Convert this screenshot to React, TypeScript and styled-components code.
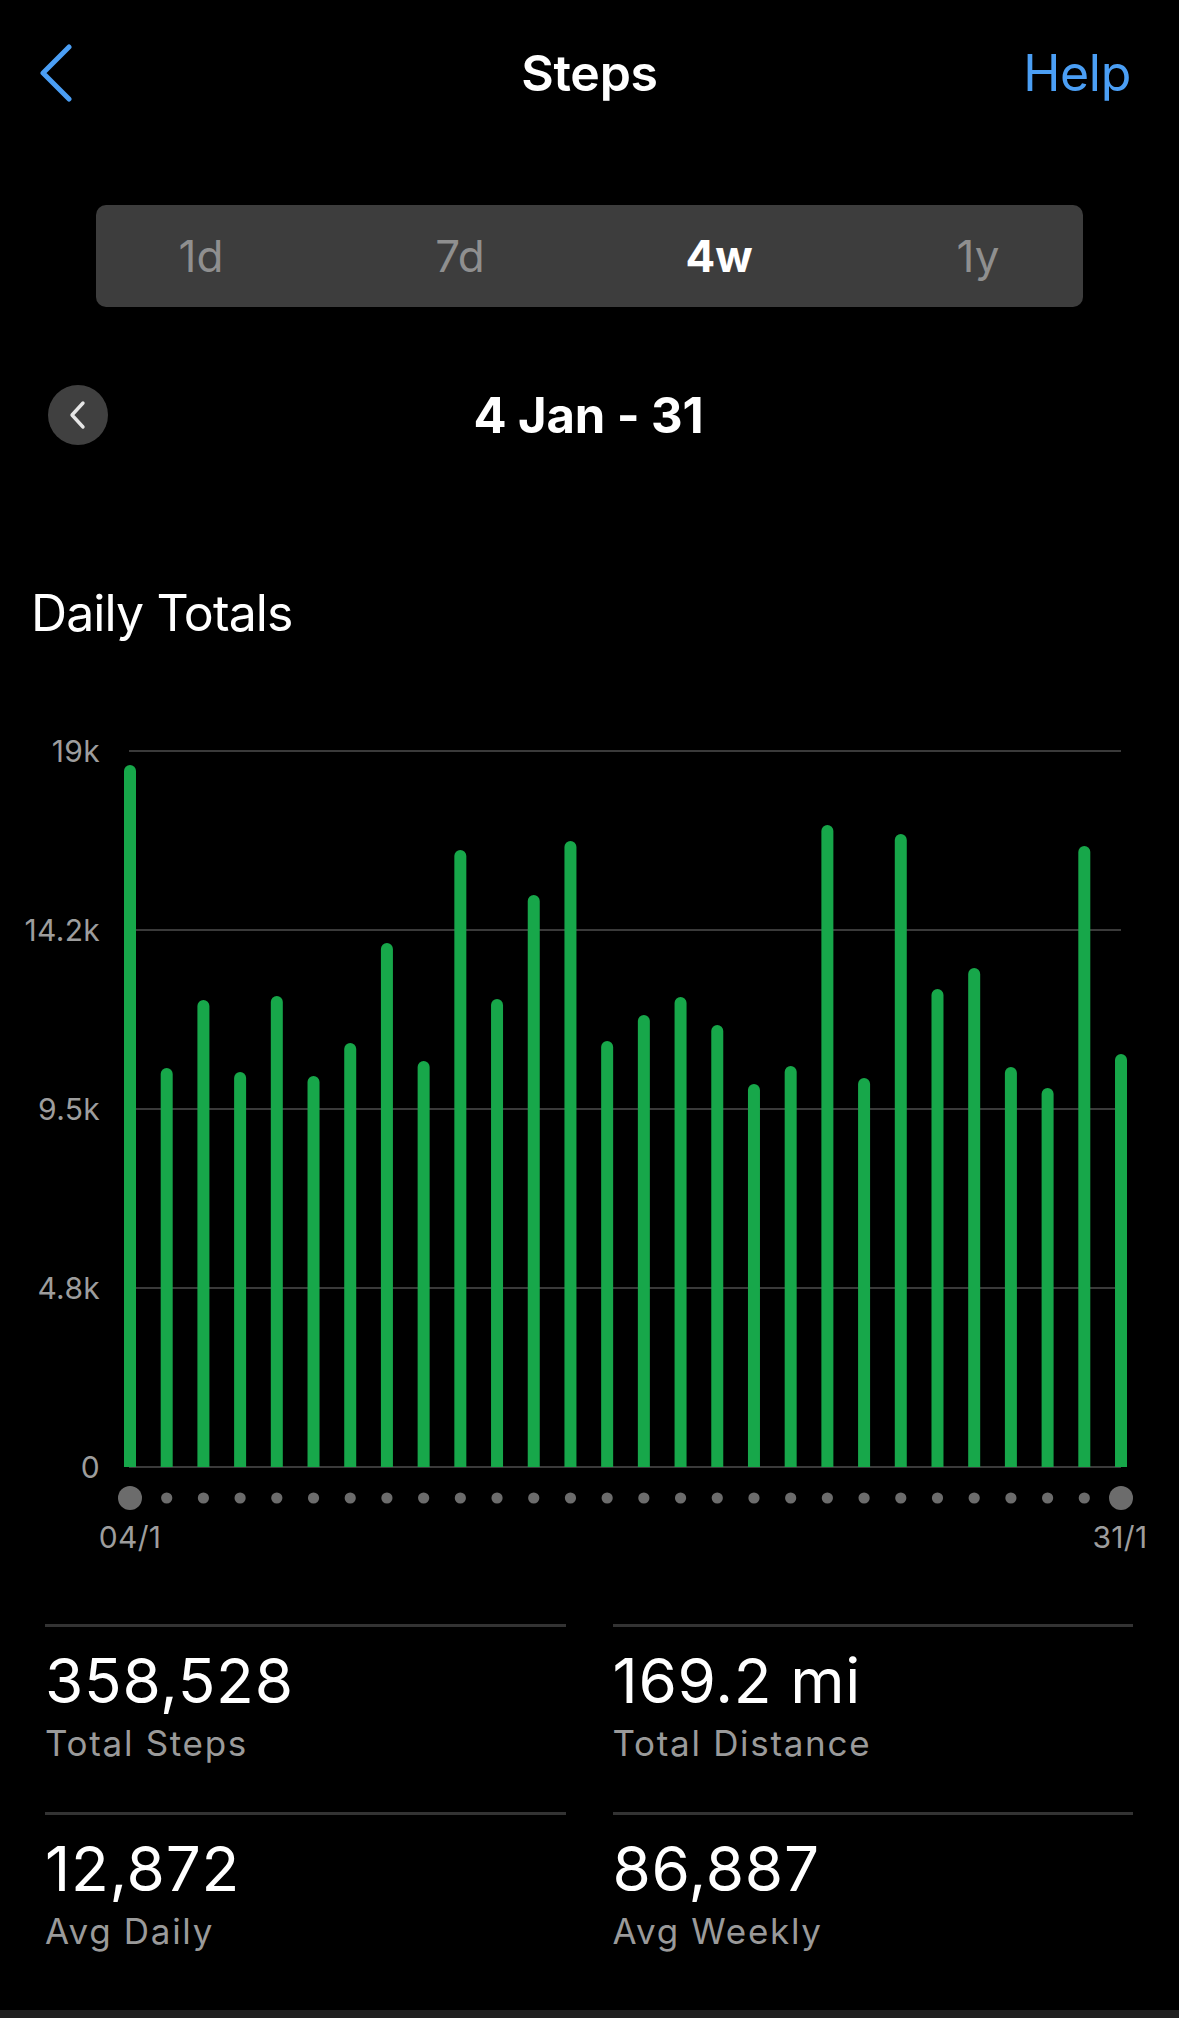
import React from "react";
import styled, { createGlobalStyle } from "styled-components";

const GlobalStyle = createGlobalStyle`
  html, body { margin: 0; padding: 0; background: #000; }
  body { font-family: Inter, "Noto Sans", "Liberation Sans", sans-serif; color: #fff; }
  * { box-sizing: border-box; }
`;

const Page = styled.div`
  width: 1179px;
  min-height: 2018px;
  background: #000;
  display: flex;
  flex-direction: column;
`;

const Header = styled.header`
  height: 146px;
  display: grid;
  grid-template-columns: 1fr auto 1fr;
  align-items: center;
`;

const BackButton = styled.button`
  justify-self: start;
  margin-left: 38px;
  padding: 0;
  border: 0;
  background: none;
  display: flex;
  align-items: center;
`;

const Title = styled.h1`
  margin: 0;
  font-size: 50px;
  line-height: 1;
  font-weight: 600;
  letter-spacing: -0.3px;
`;

const HelpLink = styled.a`
  justify-self: end;
  margin-right: 48px;
  font-size: 50px;
  line-height: 1;
  color: #4b9ff5;
  letter-spacing: -0.3px;
`;

const Segmented = styled.div`
  margin: 59px 96px 0;
  height: 102px;
  border-radius: 10px;
  background: #3d3d3d;
  display: grid;
  grid-template-columns: repeat(4, 259px);
  justify-content: center;
  align-items: center;
`;

const Segment = styled.span<{ $active?: boolean }>`
  text-align: center;
  font-size: 44px;
  line-height: 1;
  font-weight: ${(p) => (p.$active ? 700 : 400)};
  color: ${(p) => (p.$active ? "#ffffff" : "#8f8f8f")};
`;

const DateRow = styled.div`
  margin-top: 78px;
  height: 60px;
  padding-left: 48px;
  display: grid;
  grid-template-columns: 1fr auto 1fr;
  align-items: center;
`;

const CircleButton = styled.button`
  justify-self: start;
  width: 60px;
  height: 60px;
  border-radius: 50%;
  border: 0;
  padding: 0;
  background: #404040;
  display: flex;
  align-items: center;
  justify-content: center;
`;

const DateText = styled.div`
  font-size: 49px;
  font-weight: 700;
  line-height: 1;
  letter-spacing: -0.1px;
  transform: translateX(-25px);
`;

const SectionTitle = styled.h2`
  margin: 138px 0 0 31px;
  font-size: 50px;
  line-height: 60px;
  font-weight: 400;
  letter-spacing: -0.9px;
`;

const ChartRow = styled.div`
  margin-top: 91px;
  display: grid;
  grid-template-columns: 100px 1030px;
  column-gap: 10px;
  align-items: start;
`;

const YAxis = styled.div`
  height: 750px;
  display: flex;
  flex-direction: column;
  justify-content: space-between;
  align-items: flex-end;
`;

const AxisLabel = styled.span`
  font-size: 30px;
  line-height: 34px;
  color: #9d9d9d;
  letter-spacing: 0.3px;
`;

const PlotSvg = styled.svg`
  display: block;
  margin-top: 6px;
`;

const XLabels = styled.div`
  margin: 5px 0 0 85px;
  width: 1080px;
  display: flex;
  justify-content: space-between;
`;

const XLabel = styled.span`
  width: 90px;
  text-align: center;
  font-size: 30px;
  line-height: 34px;
  color: #9d9d9d;
  letter-spacing: 0.3px;
`;

const StatsGrid = styled.div`
  margin: 70px 46px 0 45px;
  display: grid;
  grid-template-columns: 1fr 1fr;
  column-gap: 47px;
`;

const StatCell = styled.div`
  border-top: 3px solid #333333;
  padding: 23px 0 48px;
  display: flex;
  flex-direction: column;
`;

const StatValue = styled.span`
  font-size: 62px;
  line-height: 62px;
  font-weight: 400;
  letter-spacing: 0.7px;
`;

const StatLabel = styled.span`
  margin-top: 10px;
  font-size: 35px;
  line-height: 42px;
  color: #9a9a9a;
  letter-spacing: 1.7px;
`;

const BottomBar = styled.div`
  margin-top: auto;
  height: 8px;
  background: #202020;
`;

const steps = [
  18628, 10588, 12392, 10482, 12498, 10376, 11251, 13905, 10774, 16373,
  12419, 15179, 16612, 11304, 11994, 12472, 11729, 10163, 10641, 17036,
  10322, 16797, 12684, 13241, 10614, 10057, 16479, 10959,
];

const MAX = 19000;
const PLOT_TOP = 11;
const PLOT_H = 716;
const BASE = PLOT_TOP + PLOT_H;
const X0 = 20;
const STEP = 36.704;
const BAR_W = 12;
const DOT_Y = 758;

function barPath(cx: number, h: number) {
  const x = cx - BAR_W / 2;
  const r = BAR_W / 2;
  const top = BASE - h;
  return `M${x} ${BASE} V${top + r} A${r} ${r} 0 0 1 ${x + BAR_W} ${top + r} V${BASE} Z`;
}

const yTicks = ["19k", "14.2k", "9.5k", "4.8k", "0"];

const stats = [
  { value: "358,528", label: "Total Steps" },
  { value: "169.2 mi", label: "Total Distance" },
  { value: "12,872", label: "Avg Daily" },
  { value: "86,887", label: "Avg Weekly" },
];

export default function App() {
  const lastX = X0 + STEP * (steps.length - 1);
  return (
    <Page>
      <GlobalStyle />
      <Header>
        <BackButton aria-label="Back">
          <svg width="36" height="58" viewBox="0 0 36 58">
            <path d="M31 3 L5 29 L31 55" fill="none" stroke="#4b9ff5" strokeWidth="5" strokeLinecap="round" strokeLinejoin="round" />
          </svg>
        </BackButton>
        <Title>Steps</Title>
        <HelpLink>Help</HelpLink>
      </Header>

      <Segmented>
        <Segment>1d</Segment>
        <Segment>7d</Segment>
        <Segment $active>4w</Segment>
        <Segment>1y</Segment>
      </Segmented>

      <DateRow>
        <CircleButton aria-label="Previous">
          <svg width="20" height="30" viewBox="0 0 20 30">
            <path d="M15 3 L4 15 L15 27" fill="none" stroke="#e6e6e6" strokeWidth="3.4" strokeLinecap="round" strokeLinejoin="round" />
          </svg>
        </CircleButton>
        <DateText>4 Jan - 31</DateText>
        <span />
      </DateRow>

      <SectionTitle>Daily Totals</SectionTitle>

      <ChartRow>
        <YAxis>
          {yTicks.map((t) => (
            <AxisLabel key={t}>{t}</AxisLabel>
          ))}
        </YAxis>
        <div>
          <PlotSvg width="1030" height="775" viewBox="0 0 1030 775">
            {yTicks.map((t, i) => {
              const y = PLOT_TOP + (PLOT_H / 4) * i;
              return <line key={t} x1={X0 - 1} x2={lastX} y1={y} y2={y} stroke="#3a3a3a" strokeWidth="2" />;
            })}
            {steps.map((s, i) => (
              <path key={i} d={barPath(X0 + STEP * i, (s / MAX) * PLOT_H)} fill="#17a74a" />
            ))}
            {steps.map((_, i) => {
              const end = i === 0 || i === steps.length - 1;
              return <circle key={i} cx={X0 + STEP * i} cy={DOT_Y} r={end ? 12 : 5.6} fill="#6c6c6c" />;
            })}
          </PlotSvg>
        </div>
      </ChartRow>
      <XLabels>
        <XLabel>04/1</XLabel>
        <XLabel>31/1</XLabel>
      </XLabels>

      <StatsGrid>
        {stats.map((s) => (
          <StatCell key={s.label}>
            <StatValue>{s.value}</StatValue>
            <StatLabel>{s.label}</StatLabel>
          </StatCell>
        ))}
      </StatsGrid>

      <BottomBar />
    </Page>
  );
}
